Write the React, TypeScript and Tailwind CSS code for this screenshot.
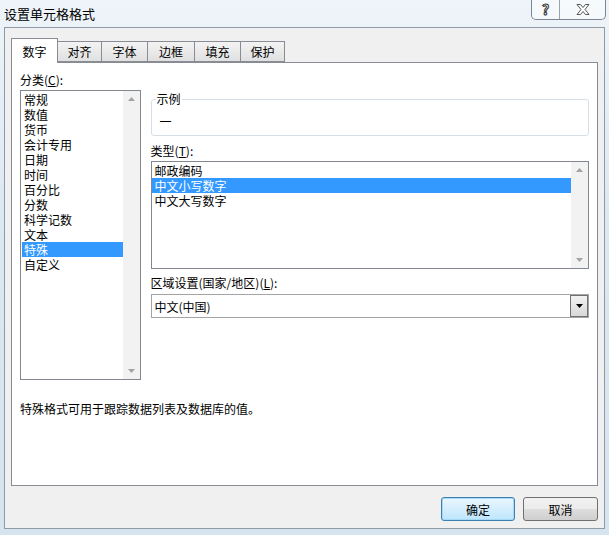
import React from 'react';

const categories = ['常规', '数值', '货币', '会计专用', '日期', '时间', '百分比', '分数', '科学记数', '文本', '特殊', '自定义'];
const types = ['邮政编码', '中文小写数字', '中文大写数字'];
const tabs = [
    { label: '数字', w: 'w-[47px]' },
    { label: '对齐', w: 'w-[44px]' },
    { label: '字体', w: 'w-[46px]' },
    { label: '边框', w: 'w-[47px]' },
    { label: '填充', w: 'w-[46px]' },
    { label: '保护', w: 'w-[44px]' },
];

const ArrowUp = () => (
    <svg width="7" height="4" viewBox="0 0 7 4"><path d="M0 4 L3.5 0 L7 4 Z" fill="#a3a3a3" /></svg>
);
const ArrowDown = ({ color = '#a3a3a3' }: { color?: string }) => (
    <svg width="7" height="4" viewBox="0 0 7 4"><path d="M0 0 L7 0 L3.5 4 Z" fill={color} /></svg>
);

const Scrollbar = () => (
    <div className="w-[17px] h-full bg-[#f2f2f2] flex flex-col items-center justify-between py-[6px]">
        <ArrowUp />
        <ArrowDown />
    </div>
);

const App: React.FC = () => {
    const selectedCat = '特殊';
    const selectedType = '中文小写数字';

    return (
        <div className="w-[609px] h-[535px] flex flex-col bg-[linear-gradient(180deg,#eef4f9_0%,#dce8f2_40%,#d6e4ef_100%)] text-[12px] leading-[15px] text-black font-['Noto_Sans_CJK_SC',sans-serif]">
            {/* Title bar */}
            <div className="h-[27px] flex justify-between pl-[4px] pr-[3px] shrink-0">
                <span className="mt-[6px] text-[13px]">设置单元格格式</span>
                <div className="flex h-[20px] border border-t-0 border-[#7d8793] rounded-b-[5px] bg-white/50 overflow-hidden">
                    <div className="w-[28px] flex items-center justify-center border-r border-[#9aa3ad] text-[14px] font-bold text-transparent [-webkit-text-stroke:1px_#333]">?</div>
                    <div className="w-[45px] flex items-center justify-center">
                        <svg width="14" height="11" viewBox="0 0 14 11">
                            <path d="M1 0.5 H4.5 L7 3.5 L9.5 0.5 H13 L9 5.5 L13 10.5 H9.5 L7 7.5 L4.5 10.5 H1 L5 5.5 Z" fill="white" stroke="#444" strokeWidth="0.9" strokeLinejoin="round" />
                        </svg>
                    </div>
                </div>
            </div>

            {/* Body */}
            <div className="mx-[4px] h-[502px] border border-[#8e9aa6] bg-[#f0f0f0] flex flex-col px-[6px] pt-[10px]">
                {/* Tabs */}
                <div className="flex items-end h-[24px] relative z-10">
                    {tabs.map((t, i) => i === 0 ? (
                        <div key={t.label} className={`${t.w} h-[25px] -mb-px bg-white border border-b-0 border-[#898c95] flex items-center justify-center pt-[1px]`}>
                            {t.label}
                        </div>
                    ) : (
                        <div key={t.label} className={`${t.w} h-[21px] border border-l-0 border-[#898c95] bg-[linear-gradient(180deg,#f3f3f3,#e0e0e0)] flex items-center justify-center`}>
                            {t.label}
                        </div>
                    ))}
                </div>

                {/* Panel */}
                <div className="w-[587px] h-[424px] border border-[#898c95] bg-white px-[8px] pt-[9px]">
                    <div className="flex">
                        {/* Left column */}
                        <div className="w-[121px]">
                            <div>分类(<span className="underline">C</span>):</div>
                            <div className="mt-[3px] h-[290px] border border-[#828790] flex">
                                <div className="flex-1 pt-[1px] pl-[1px]">
                                    {categories.map(c => (
                                        <div key={c} className={`h-[15px] pl-[2px] ${c === selectedCat ? 'bg-[#3399ff] text-white' : ''}`}>{c}</div>
                                    ))}
                                </div>
                                <Scrollbar />
                            </div>
                        </div>

                        {/* Right column */}
                        <div className="ml-[10px] w-[440px]">
                            <div className="mt-[27px] w-[438px] h-[37px] border border-[#d5dfe5] rounded-[3px] relative pl-[8px] pt-[14px]">
                                <span className="absolute -top-[9px] left-[4px] bg-white px-[1px]">示例</span>
                                一
                            </div>
                            <div className="mt-[7px]">类型(<span className="underline">T</span>):</div>
                            <div className="mt-[3px] h-[108px] border border-[#828790] flex">
                                <div className="flex-1 pt-[1px]">
                                    {types.map(t => (
                                        <div key={t} className={`h-[15px] pl-[3px] ${t === selectedType ? 'bg-[#3399ff] text-white' : ''}`}>{t}</div>
                                    ))}
                                </div>
                                <Scrollbar />
                            </div>
                            <div className="mt-[6px]">区域设置(国家/地区)(<span className="underline">L</span>):</div>
                            <div className="mt-[4px] h-[24px] border border-[#a4a4a4] flex items-center justify-between">
                                <span className="pl-[3px]">中文(中国)</span>
                                <div className="w-[18px] h-[22px] border border-[#707070] bg-[linear-gradient(180deg,#f2f2f2,#d8d8d8)] flex items-center justify-center">
                                    <ArrowDown color="#000" />
                                </div>
                            </div>
                        </div>
                    </div>

                    <div className="mt-[21px]">特殊格式可用于跟踪数据列表及数据库的值。</div>
                </div>

                {/* Buttons */}
                <div className="mt-[11px] flex justify-end gap-[8px] w-[587px]">
                    <button className="w-[74px] h-[24px] rounded-[3px] border border-[#3c7fb1] bg-[linear-gradient(180deg,#eaf6fd,#bee6fd)] shadow-[inset_0_0_0_1px_#a7d8f5] text-[12px]">确定</button>
                    <button className="w-[75px] h-[24px] rounded-[3px] border border-[#707070] bg-[linear-gradient(180deg,#f2f2f2_0%,#ebebeb_50%,#dddddd_51%,#cfcfcf_100%)] text-[12px]">取消</button>
                </div>
            </div>
        </div>
    );
};

export default App;
